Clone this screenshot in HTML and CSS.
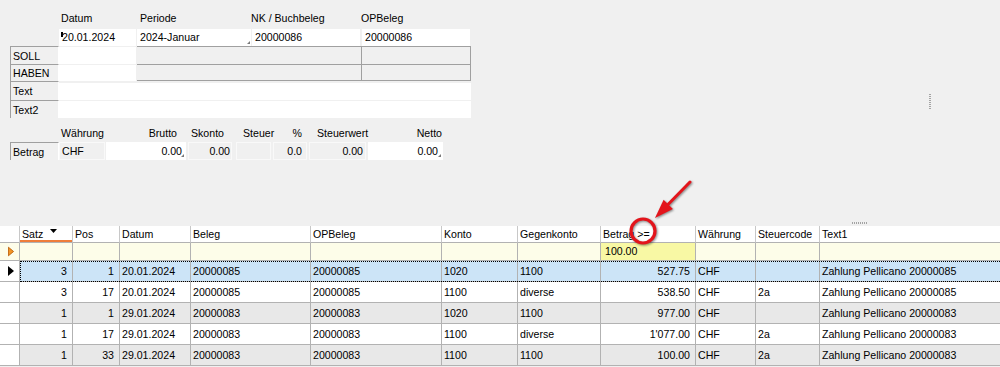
FILE: index.html
```html
<!DOCTYPE html>
<html lang="de">
<head>
  <meta charset="UTF-8" />
  <title>Buchungen</title>
  <link rel="stylesheet" href="styles.css">
</head>
<body>
  <div class="page">
    <div class="top">
      <div class="maske">
        <div class="beleg">
          <div></div>
          <div class="cap">Datum</div>
          <div class="cap pad3">Periode</div>
          <div class="cap pad0">NK / Buchbeleg</div>
          <div class="cap pad0">OPBeleg</div>

          <div></div>
          <div class="inp"><span class="caret"></span>20.01.2024</div>
          <div class="inp grip">2024-Januar</div>
          <div class="inp w-nk">20000086</div>
          <div class="inp">20000086</div>

          <div class="rl">SOLL</div>
          <div class="wf"></div>
          <div class="gf span2"></div>
          <div class="gf"></div>

          <div class="rl">HABEN</div>
          <div class="wf"></div>
          <div class="gf span2 unten"></div>
          <div class="gf unten"></div>

          <div class="rl">Text</div>
          <div class="wf lang"></div>

          <div class="rl">Text2</div>
          <div class="wf lang zwei"></div>
        </div>

        <div class="summen">
          <div class="skopf">
            <div class="f-label"></div>
            <div class="f-whg pl2">Währung</div>
            <div class="f-brutto r pr9">Brutto</div>
            <div class="f-skonto pl3">Skonto</div>
            <div class="f-steuer pl7">Steuer</div>
            <div class="f-proz r pr5">%</div>
            <div class="f-swert pl8">Steuerwert</div>
            <div class="f-netto r pr1">Netto</div>
          </div>
          <div class="szeile">
            <div class="rl f-label">Betrag</div>
            <div class="fld f-whg pl2">CHF</div>
            <div class="fld weiss grip f-brutto r pr3">0.00</div>
            <div class="fld f-skonto r pr1">0.00</div>
            <div class="fld f-steuer"></div>
            <div class="fld f-proz r pr4">0.0</div>
            <div class="fld f-swert r pr2">0.00</div>
            <div class="fld weiss grip f-netto r pr4">0.00</div>
          </div>
        </div>
      </div>
      <div class="vgriff"></div>
    </div>

    <div class="splitter"><div class="hgriff"></div></div>

    <div class="tabelle">
      <div class="zeile kopfzeile">
        <div></div>
        <div class="sortiert">Satz<svg class="sortpfeil" width="7" height="4" viewBox="0 0 7 4"><polygon points="0,0 7,0 3.5,4" fill="#000"/></svg></div>
        <div>Pos</div>
        <div>Datum</div>
        <div>Beleg</div>
        <div>OPBeleg</div>
        <div>Konto</div>
        <div>Gegenkonto</div>
        <div>Betrag<span class="op">&gt;=</span></div>
        <div>Währung</div>
        <div>Steuercode</div>
        <div>Text1</div>
      </div>

      <div class="zeile filter">
        <div class="kopfzelle"><svg width="7" height="11" viewBox="0 0 7 11"><polygon points="0.5,0.5 6.5,5.5 0.5,10.5" fill="#f29424" stroke="#b85a06" stroke-width="1"/></svg></div>
        <div></div>
        <div></div>
        <div></div>
        <div></div>
        <div></div>
        <div></div>
        <div></div>
        <div class="aktiv">100.00</div>
        <div></div>
        <div></div>
        <div></div>
      </div>

      <div class="zeile sel">
        <div class="kopfzelle"><svg width="6" height="10" viewBox="0 0 6 10"><polygon points="0,0 6,5 0,10" fill="#000"/></svg></div>
        <div class="r">3</div>
        <div class="r">1</div>
        <div>20.01.2024</div>
        <div>20000085</div>
        <div>20000085</div>
        <div>1020</div>
        <div>1100</div>
        <div class="r">527.75</div>
        <div>CHF</div>
        <div></div>
        <div>Zahlung Pellicano 20000085</div>
      </div>

      <div class="zeile">
        <div class="kopfzelle"></div>
        <div class="r">3</div>
        <div class="r">17</div>
        <div>20.01.2024</div>
        <div>20000085</div>
        <div>20000085</div>
        <div>1100</div>
        <div>diverse</div>
        <div class="r">538.50</div>
        <div>CHF</div>
        <div>2a</div>
        <div>Zahlung Pellicano 20000085</div>
      </div>

      <div class="zeile grau">
        <div class="kopfzelle"></div>
        <div class="r">1</div>
        <div class="r">1</div>
        <div>29.01.2024</div>
        <div>20000083</div>
        <div>20000083</div>
        <div>1020</div>
        <div>1100</div>
        <div class="r">977.00</div>
        <div>CHF</div>
        <div></div>
        <div>Zahlung Pellicano 20000083</div>
      </div>

      <div class="zeile">
        <div class="kopfzelle"></div>
        <div class="r">1</div>
        <div class="r">17</div>
        <div>29.01.2024</div>
        <div>20000083</div>
        <div>20000083</div>
        <div>1100</div>
        <div>diverse</div>
        <div class="r">1'077.00</div>
        <div>CHF</div>
        <div>2a</div>
        <div>Zahlung Pellicano 20000083</div>
      </div>

      <div class="zeile grau">
        <div class="kopfzelle"></div>
        <div class="r">1</div>
        <div class="r">33</div>
        <div>29.01.2024</div>
        <div>20000083</div>
        <div>20000083</div>
        <div>1100</div>
        <div>1100</div>
        <div class="r">100.00</div>
        <div>CHF</div>
        <div>2a</div>
        <div>Zahlung Pellicano 20000083</div>
      </div>
    </div>

    <svg class="markierung" width="80" height="75" viewBox="0 0 80 75">
      <circle cx="23" cy="56" r="12" fill="none" stroke="#e3141b" stroke-width="3.2"/>
      <line x1="70" y1="7" x2="47" y2="30.5" stroke="#e3141b" stroke-width="3" stroke-linecap="round"/>
      <polygon points="35,43 52.9,33.9 43.6,24.8" fill="#e3141b"/>
    </svg>
  </div>
</body>
</html>
```

FILE: styles.css
```css
* {
  box-sizing: border-box;
}
body {
  margin: 0;
  background-color: #f0f0f0;
  font-family: "Liberation Sans", Arial, sans-serif;
  font-size: 10.6px;
  color: #000;
  overflow: hidden;
}
.page {
  position: relative;
  width: 1000px;
  height: 367px;
}

/* obere Maske */
.top {
  display: flex;
  height: 221px;
}
.maske {
  width: 471px;
}
.beleg {
  display: grid;
  grid-template-columns: 49px 78px 115px 110px 109px;
  grid-template-rows: 29px 17px 18px 17px 19px 18px;
  margin-left: 10px;
}
.cap {
  padding: 12px 0 0 2px;
  line-height: 13px;
  white-space: nowrap;
}
.cap.pad3 {
  padding-left: 3px;
}
.cap.pad0 {
  padding-left: 0;
  margin-left: -1px;
}
.inp {
  position: relative;
  background-color: #fff;
  line-height: 17px;
  padding-left: 3px;
  margin-right: 1px;
  white-space: nowrap;
}
.inp.w-nk {
  margin-right: 2px;
}
.caret {
  position: absolute;
  left: 2px;
  top: 3px;
  width: 2px;
  height: 5px;
  background-color: #000;
}
.grip {
  position: relative;
}
.grip::after {
  content: "";
  position: absolute;
  right: 1px;
  bottom: 2px;
  border-left: 3px solid transparent;
  border-bottom: 3px solid #7a7a7a;
}
.rl {
  display: flex;
  align-items: center;
  border-left: 1px solid #a0a0a0;
  border-top: 1px solid #a0a0a0;
  border-right: 1px solid #fff;
  padding-left: 2px;
}
.wf {
  background-color: #fff;
  margin: 1px 1px 0 0;
}
.wf.lang {
  grid-column: 2 / 6;
  margin: 2px 0 0 0;
}
.wf.lang.zwei {
  margin-top: 1px;
}
.gf {
  border-top: 1px solid #a0a0a0;
  border-right: 1px solid #a0a0a0;
}
.gf.span2 {
  grid-column: span 2;
}
.gf.unten {
  border-bottom: 1px solid #a0a0a0;
}

/* Betragszeile */
.summen {
  margin-left: 10px;
}
.skopf {
  display: flex;
  margin-top: 8px;
  height: 14px;
  line-height: 14px;
  white-space: nowrap;
}
.szeile {
  display: flex;
  margin-top: 2px;
  height: 18px;
  line-height: 16px;
}
.fld {
  border: 1px solid #f9f9f9;
}
.fld.weiss {
  background-color: #fff;
  border-color: #fff;
}
.f-label { width: 49px; }
.f-whg { width: 46px; margin-right: 1px; }
.f-brutto { width: 80px; margin-right: 2px; }
.f-skonto { width: 44px; margin-right: 4px; }
.f-steuer { width: 35px; margin-right: 2px; }
.f-proz { width: 34px; margin-right: 2px; }
.f-swert { width: 57px; margin-right: 2px; }
.f-netto { width: 75px; }
.r { text-align: right; }
.pl2 { padding-left: 2px; }
.pl3 { padding-left: 3px; }
.pl7 { padding-left: 7px; }
.pl8 { padding-left: 8px; }
.pr1 { padding-right: 1px; }
.pr2 { padding-right: 2px; }
.pr3 { padding-right: 3px; }
.pr4 { padding-right: 4px; }
.pr5 { padding-right: 5px; }
.pr9 { padding-right: 9px; }

.vgriff {
  width: 2px;
  height: 16px;
  margin: 94px 69px 0 auto;
  background: repeating-linear-gradient(#a3a3a3 0 1px, transparent 1px 2px);
}
.splitter {
  height: 5px;
  padding-top: 1px;
}
.hgriff {
  width: 16px;
  height: 2px;
  margin-left: 852px;
  background: repeating-linear-gradient(90deg, #a3a3a3 0 1px, transparent 1px 2px);
}

/* Tabelle */
.zeile {
  display: grid;
  grid-template-columns: 20px 53px 47px 71px 120px 131px 76px 83px 95px 60px 64px 180px;
  height: 21px;
  background-color: #fff;
}
.zeile > div {
  border-right: 1px solid #b2b2b2;
  border-bottom: 1px solid #b2b2b2;
  padding: 0 5px 0 2px;
  line-height: 20px;
  white-space: nowrap;
  overflow: hidden;
}
.zeile > div:last-child {
  border-right: none;
}
.zeile > div.r {
  text-align: right;
}
.zeile.grau > div {
  background-color: #e8e8e8;
}
.zeile.sel > div {
  background-color: #cce4f7;
}
.zeile > div.kopfzelle {
  display: flex;
  align-items: center;
  padding-left: 8px;
  background-color: #fff;
}
.zeile.sel {
  position: relative;
}
.zeile.sel::after {
  content: "";
  position: absolute;
  left: 20px;
  right: 0;
  top: 0;
  bottom: 0;
  border: 1px dotted #000;
  border-right: none;
}
.kopfzeile {
  height: 17px;
}
.kopfzeile > div {
  line-height: 16px;
  border-right-color: #c8c8c8;
  border-bottom-color: #b2b2b2;
}
.sortiert {
  box-shadow: inset 0 -2px 0 #ef7d3a;
}
.sortpfeil {
  margin-left: 7px;
  vertical-align: 5px;
}
.op {
  margin-left: 3px;
}
.filter {
  height: 18px;
}
.filter > div {
  line-height: 17px;
  background-color: #fdfde9;
}
.filter > div.kopfzelle {
  background-color: #fdfde9;
}
.filter > div.aktiv {
  background-color: #f8f8a4;
  padding-left: 4px;
}

.markierung {
  position: absolute;
  left: 620px;
  top: 175px;
  filter: drop-shadow(1px 1px 1px rgba(0, 0, 0, 0.45));
}
```
